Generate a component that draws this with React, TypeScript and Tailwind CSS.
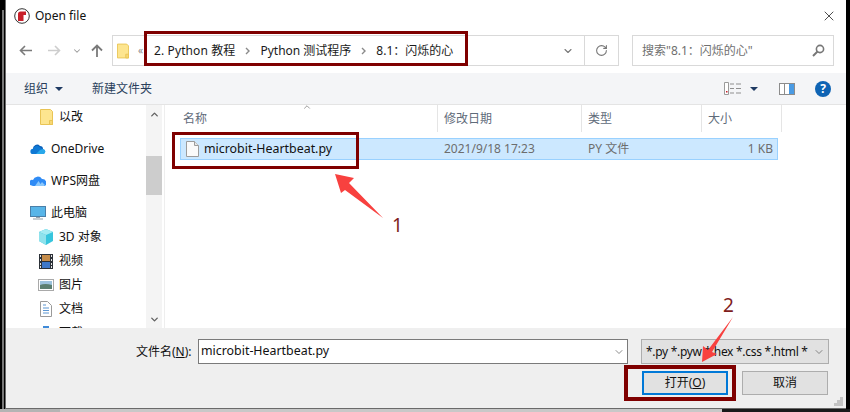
import React from 'react';
import { ChevronDown, ChevronUp, RotateCw, X } from 'lucide-react';

const FONT = '[font-family:"Noto_Sans","Noto_Sans_CJK_SC",sans-serif]';

const FolderIcon = ({ className }: { className: string }) => (
  <svg viewBox="0 0 13 16" className={`shrink-0 ${className}`}>
    <path d="M.5.5h10l2 2v13H.5z" fill="#fde58f" stroke="#e9c455" />
    <path d="M9.5 15.5v-4h3v4z" fill="#f7d774" stroke="#e9c455" />
  </svg>
);

const OneDriveIcon = () => (
  <svg viewBox="0 0 16 10" className="w-[16px] h-[10px]">
    <path d="M3 5a4 4 0 0 1 7-3 3 3 0 0 1 3 3z" fill="#0a5fb8" />
    <path d="M3 10a2.6 2.6 0 0 1 0-5.2 4 4 0 0 1 7-1.5l3 2A2.4 2.4 0 0 1 13.4 10z" fill="#0f78d4" />
    <path d="M6 10l4-4 3-1a2.6 2.6 0 0 1 .6 5z" fill="#29a8ea" />
  </svg>
);

const WpsIcon = () => (
  <svg viewBox="0 0 16 11" className="w-[16px] h-[11px]">
    <path d="M0 9a3 3 0 0 1 3-5 5 5 0 0 1 9-1 4 4 0 0 1 3 7H3z" fill="#2f8bf5" />
    <path d="M5 10l3.5-5 2 3 1.5-2 3 3-1 1z" fill="#8cc8fb" />
  </svg>
);

const PcIcon = () => (
  <svg viewBox="0 0 16 14" className="w-[16px] h-[14px]">
    <rect x=".5" y=".5" width="15" height="10" fill="#58b5e8" stroke="#4a7fa8" />
    <rect x="6" y="11" width="4" height="1" fill="#9aa6ae" />
    <rect x="3" y="12" width="10" height="2" fill="#c7ced3" />
  </svg>
);

const CubeIcon = () => (
  <svg viewBox="0 0 16 16" className="w-[16px] h-[16px]">
    <path d="M8 0l7 3v9l-7 4-7-4V3z" fill="#37c5dd" />
    <path d="M8 0l7 3-7 3-7-3z" fill="#a5ecf3" />
    <path d="M1 3l7 3v10l-7-4z" fill="#8fe2ec" />
  </svg>
);

const VideoIcon = () => (
  <svg viewBox="0 0 14 15" className="w-[14px] h-[15px]">
    <rect width="14" height="15" fill="#2c3138" />
    <rect x="3" y="1" width="8" height="6" fill="#c58c4a" />
    <rect x="3" y="8" width="8" height="6" fill="#3f78c9" />
    <path d="M1 1h1v2H1zM1 5h1v2H1zM1 9h1v2H1zM12 1h1v2h-1zM12 5h1v2h-1zM12 9h1v2h-1zM1 12h1v2H1zM12 12h1v2h-1z" fill="#e6e6e6" />
  </svg>
);

const PictureIcon = () => (
  <svg viewBox="0 0 16 12" className="w-[16px] h-[12px]">
    <rect x=".5" y=".5" width="15" height="11" fill="#fff" stroke="#a9a9a9" />
    <rect x="2" y="2" width="12" height="4" fill="#9cc3dd" />
    <path d="M2 6q5-2 12 0v4H2z" fill="#5b7f70" />
  </svg>
);

const DocIcon = () => (
  <svg viewBox="0 0 12 16" className="w-[12px] h-[16px]">
    <path d="M.5.5h7l4 4v11H.5z" fill="#fff" stroke="#9a9a9a" />
    <path d="M3 4h3M3 7h6M3 9.5h6M3 12h6" stroke="#5d97d3" />
  </svg>
);

const FileIcon = () => (
  <svg viewBox="0 0 13 16" className="w-[13px] h-[16px] shrink-0">
    <path d="M.5.5h8l4 4v11H.5z" fill="#fafafa" stroke="#9c9c9c" />
    <path d="M8.5.5v4h4" fill="#e8e8e8" stroke="#9c9c9c" />
  </svg>
);

const DownloadIcon = () => (
  <svg viewBox="0 0 14 14" className="w-[14px] h-[14px]">
    <rect x="4" y="0" width="6" height="8" fill="#3f8ad8" />
  </svg>
);

const NavArrow = ({ color, flip }: { color: string; flip?: boolean }) => (
  <svg viewBox="0 0 13 11" className={`w-[13px] h-[11px] ${flip ? 'rotate-180' : ''}`}>
    <path d="M13 5.5H1.5M6 1L1.5 5.5 6 10" fill="none" stroke={color} strokeWidth="1.6" />
  </svg>
);

const Caret = () => (
  <svg viewBox="0 0 8 4" className="w-[8px] h-[4px]">
    <path d="M0 0h8L4 4z" fill="#1f3a63" />
  </svg>
);

const Sep = ({ className }: { className: string }) => (
  <svg viewBox="0 0 5 8" className={`w-[5px] h-[8px] ${className}`}>
    <path d="M1 1l3 3-3 3" fill="none" stroke="#8a8a8a" strokeWidth="1.4" />
  </svg>
);

const navItems = [
  { label: '以改', icon: <FolderIcon className="w-[13px] h-[16px]" />, indent: 'pl-[34px]', slot: 'w-[19px]', mt: '' },
  { label: 'OneDrive', icon: <OneDriveIcon />, indent: 'pl-[24px]', slot: 'w-[21px]', mt: 'mt-[8px]' },
  { label: 'WPS网盘', icon: <WpsIcon />, indent: 'pl-[24px]', slot: 'w-[21px]', mt: 'mt-[8px]' },
  { label: '此电脑', icon: <PcIcon />, indent: 'pl-[24px]', slot: 'w-[21px]', mt: 'mt-[8px]' },
  { label: '3D 对象', icon: <CubeIcon />, indent: 'pl-[32px]', slot: 'w-[21px]', mt: '' },
  { label: '视频', icon: <VideoIcon />, indent: 'pl-[33px]', slot: 'w-[20px]', mt: '' },
  { label: '图片', icon: <PictureIcon />, indent: 'pl-[32px]', slot: 'w-[21px]', mt: '' },
  { label: '文档', icon: <DocIcon />, indent: 'pl-[34px]', slot: 'w-[19px]', mt: '' },
  { label: '下载', icon: <DownloadIcon />, indent: 'pl-[33px]', slot: 'w-[20px]', mt: '' },
];

const columns = [
  { label: '名称', className: 'w-[273px] pl-[18px]' },
  { label: '修改日期', className: 'w-[144px] pl-[6px]' },
  { label: '类型', className: 'w-[120px] pl-[6px]' },
  { label: '大小', className: 'w-[80px] pl-[6px]' },
];

export default function App() {
  return (
    <div className={`relative w-[850px] h-[412px] bg-black overflow-hidden ${FONT}`}>
      <div className="absolute left-[2px] top-[10px] w-[2px] h-[399px] bg-[#777777]" />
      <div className="ml-[5px] w-[841px] h-[409px] flex flex-col bg-white border-l border-b border-[#6a6a6a]">
        {/* Title bar */}
        <div className="h-[32px] shrink-0 flex items-center pl-[8px] pr-[9px]">
          <svg viewBox="0 0 16 16" className="w-[16px] h-[16px]">
            <circle cx="8" cy="8" r="7.3" fill="#fff" stroke="#333" />
            <path d="M4 13V6a2.5 2.5 0 0 1 2.5-2.5H12V7H9.5v6z" fill="#c8202a" />
          </svg>
          <span className="ml-[5px] text-[12px] text-[#111]">Open file</span>
          <X className="ml-auto text-[#222]" size={16} strokeWidth={1.2} />
        </div>

        {/* Address row */}
        <div className="h-[41px] shrink-0 flex pt-[3px] pl-[13px]">
          <div className="w-[93px] h-[31px] flex items-center">
            <NavArrow color="#7a7a7a" />
            <span className="ml-[16px]"><NavArrow color="#cdcdcd" flip /></span>
            <ChevronDown className="ml-[11px] text-[#9a9a9a]" size={10} strokeWidth={2.5} />
            <svg viewBox="0 0 12 13" className="ml-[9px] w-[12px] h-[13px]">
              <path d="M6 13V2M1 6.5L6 1.5l5 5" fill="none" stroke="#7a7a7a" strokeWidth="1.8" />
            </svg>
          </div>
          <div className="w-[507px] h-[31px] flex items-center border border-[#d9d9d9] text-[12px] text-[#1a1a1a]">
            <FolderIcon className="ml-[4px] w-[12px] h-[16px]" />
            <span className="ml-[9px] text-[#8a8a8a] text-[10px]">«</span>
            <span className="ml-[11px] tracking-[0.1px]">2. Python 教程</span>
            <Sep className="ml-[10px]" />
            <span className="ml-[10px]">Python 测试程序</span>
            <Sep className="ml-[10px]" />
            <span className="ml-[10px]">8.1：闪烁的心</span>
            <ChevronDown className="ml-auto mr-[44px] text-[#777]" size={12} strokeWidth={2.2} />
          </div>
          <div className="-ml-[35px] w-[35px] h-[31px] flex items-center justify-center border border-[#d9d9d9] bg-white">
            <RotateCw className="text-[#777]" size={13} strokeWidth={2} />
          </div>
          <div className="ml-[13px] w-[202px] h-[31px] flex items-center border border-[#d9d9d9] pl-[9px] pr-[8px] text-[12px] text-[#6f6f6f]">
            <span>搜索"8.1：闪烁的心"</span>
            <svg viewBox="0 0 13 13" className="ml-auto w-[13px] h-[13px]">
              <circle cx="8" cy="5" r="3.6" fill="none" stroke="#777" strokeWidth="1.6" />
              <path d="M5.5 7.5L1 12" stroke="#777" strokeWidth="2" />
            </svg>
          </div>
        </div>

        {/* Toolbar */}
        <div className="h-[32px] shrink-0 flex items-center bg-[#f4f5f7] border-b border-[#e4e4e4] pl-[18px] text-[12px] text-[#2a3f5c]">
          <span>组织</span>
          <span className="ml-[7px]"><Caret /></span>
          <span className="ml-[29px]">新建文件夹</span>
          <svg viewBox="0 0 17 13" className="ml-auto w-[17px] h-[13px]">
            <path d="M.5.5h4v12h-4z" fill="#fff" stroke="#9a9a9a" />
            <path d="M6 2h4M12 2h5M6 6.5h4M12 6.5h5M6 11h4M12 11h5" stroke="#8f8f8f" />
            <path d="M2 9h1.5v1.5H2z" fill="#c8202a" />
          </svg>
          <span className="ml-[9px]"><Caret /></span>
          <svg viewBox="0 0 16 12" className="ml-[21px] w-[16px] h-[12px]">
            <rect x=".5" y=".5" width="15" height="11" fill="#fff" stroke="#8c8c8c" />
            <rect x="5" y="1" width="1" height="10" fill="#8c8c8c" />
            <rect x="10" y="1" width="5" height="10" fill="#4a9be4" />
          </svg>
          <span className="ml-[20px] mr-[15px] w-[16px] h-[16px] rounded-full bg-[#0f64b4] text-white text-[12px] font-bold flex items-center justify-center">?</span>
        </div>

        {/* Navigation pane + file list */}
        <div className="h-[223px] shrink-0 flex text-[12px]">
          <div className="w-[140px] shrink-0 overflow-hidden text-[#111]">
            {navItems.map(item => (
              <div key={item.label} className={`h-[24px] flex items-center ${item.indent} ${item.mt}`}>
                <span className={`${item.slot} shrink-0 flex items-center`}>{item.icon}</span>
                <span className="whitespace-nowrap">{item.label}</span>
              </div>
            ))}
          </div>
          <div className="w-[16px] shrink-0 flex flex-col items-center bg-[#f4f4f4]">
            <ChevronUp className="mt-[4px] text-[#606060]" size={11} strokeWidth={3} />
            <div className="mt-[36px] w-full h-[39px] bg-[#cdcdcd]" />
            <ChevronDown className="mt-auto mb-[3px] text-[#606060]" size={11} strokeWidth={3} />
          </div>
          <div className="w-[3px] shrink-0 border-r border-[#eeeeee]" />
          <div className="relative flex-1 min-w-0">
            <ChevronUp className="absolute left-[137px] -top-[3px] text-[#8a8a8a]" size={10} />
            <div className="h-[27px] flex text-[#5f6b7a]">
              {columns.map(col => (
                <div key={col.label} className={`${col.className} shrink-0 flex items-center border-r border-[#e5e5e5]`}>
                  {col.label}
                </div>
              ))}
            </div>
            <div className="mt-[6px] ml-[15px] w-[598px] h-[22px] flex items-center bg-[#cce8ff] border border-[#99d1ff] text-[#6d6d6d]">
              <div className="w-[257px] shrink-0 flex items-center pl-[5px] text-[#111]">
                <FileIcon />
                <span className="ml-[5px] text-[12.4px]">microbit-Heartbeat.py</span>
              </div>
              <div className="w-[144px] shrink-0 pl-[6px]">2021/9/18 17:23</div>
              <div className="w-[120px] shrink-0 pl-[6px]">PY 文件</div>
              <div className="flex-1 text-right pr-[4px]">1 KB</div>
            </div>
          </div>
        </div>

        {/* Bottom panel */}
        <div className="flex-1 bg-[#efefef] relative text-[12px] text-[#111]">
          <div className="mt-[11px] flex items-center">
            <span className="ml-[130px] w-[57px] whitespace-nowrap">文件名(<span className="underline">N</span>):</span>
            <div className="ml-[5px] w-[430px] h-[25px] flex items-center bg-white border border-[#7a7a7a] pl-[2px] pr-[2px] text-[12.4px]">
              <span>microbit-Heartbeat.py</span>
              <ChevronDown className="ml-auto shrink-0 text-[#666]" size={12} strokeWidth={1.5} />
            </div>
            <div className="ml-[13px] w-[188px] h-[25px] flex items-center bg-[#e1e1e1] border border-[#adadad] pl-[4px] pr-[3px] text-[12px]">
              <span className="whitespace-nowrap tracking-[-0.3px]">*.py *.pyw *.hex *.css *.html *</span>
              <ChevronDown className="ml-auto shrink-0 text-[#666]" size={12} strokeWidth={1.5} />
            </div>
          </div>
          <div className="mt-[7px] flex justify-end gap-[14px] pr-[18px]">
            <button className="w-[86px] h-[24px] bg-[#e1e1e1] border-2 border-[#0078d7]">
              打开(<span className="underline">O</span>)
            </button>
            <button className="w-[86px] h-[24px] bg-[#e1e1e1] border border-[#adadad]">取消</button>
          </div>
          {/* Resize grip */}
          <svg viewBox="0 0 9 9" className="absolute right-[3px] bottom-[2px] w-[9px] h-[9px]">
            <path d="M6 0h3v3H6zM3 3h3v3H3zM6 3h3v3H6zM0 6h3v3H0zM3 6h3v3H3zM6 6h3v3H6z" fill="#c4c4c4" />
          </svg>
        </div>
      </div>

      {/* Strip of desktop below the window */}
      <div className="h-[3px] flex">
        <div className="w-[60px] bg-[#b4b4b4]" />
        <div className="w-[662px] bg-[#c8c8c8]" />
        <div className="flex-1 bg-[#1a1a1a]" />
      </div>

      {/* Annotations drawn on top of the screenshot */}
      <div className="absolute left-[144px] top-[31px] w-[324px] h-[35px] border-[3px] border-[#7f0000]" />
      <div className="absolute left-[172px] top-[132px] w-[187px] h-[37px] border-[3px] border-[#7f0000]" />
      <div className="absolute left-[624px] top-[365px] w-[112px] h-[36px] border-[4px] border-[#7f0000]" />
      <svg viewBox="0 0 850 412" className="absolute inset-0 w-[850px] h-[412px] pointer-events-none">
        <polygon points="335,174 354,178 349,183 383,218 345,190 341,193" fill="#f8413f" />
        <polygon points="702,362 703,346 708,350 733,317 712,352 717,354" fill="#f8413f" />
      </svg>
      <span className="absolute left-[392px] top-[212px] text-[19px] leading-[26px] text-[#7f1d1d]">1</span>
      <span className="absolute left-[723px] top-[292px] text-[19px] leading-[26px] text-[#7f1d1d]">2</span>
    </div>
  );
}
